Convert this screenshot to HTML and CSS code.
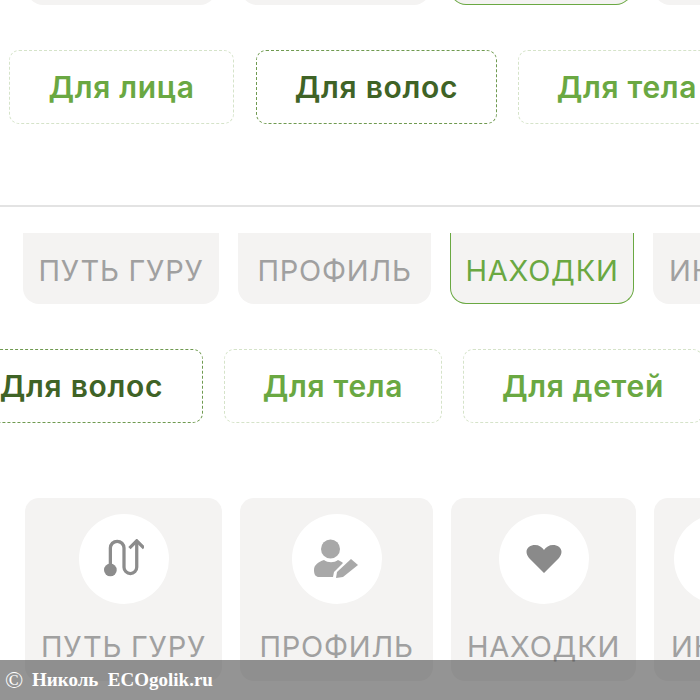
FILE: index.html
```html
<!DOCTYPE html>
<html lang="en">
<head>
  <meta charset="UTF-8">
  <title>Находки</title>
  <link rel="stylesheet" href="styles.css">
</head>
<body>
  <main class="page">
    <div class="tabs tabs-top">
      <div class="tab tab-a"></div>
      <div class="tab tab-b"></div>
      <div class="tab tab-c active"></div>
      <div class="tab tab-d"></div>
    </div>

    <div class="chips chips-one">
      <a class="chip chip-face">Для лица</a>
      <a class="chip chip-hair selected">Для волос</a>
      <a class="chip chip-body">Для тела</a>
    </div>

    <hr class="divider">

    <div class="tabs tabs-mid">
      <div class="tab tab-a">ПУТЬ ГУРУ</div>
      <div class="tab tab-b">ПРОФИЛЬ</div>
      <div class="tab tab-c active">НАХОДКИ</div>
      <div class="tab tab-d">ИКОНКИ</div>
    </div>

    <div class="chips chips-two">
      <a class="chip chip-hair2 selected">Для волос</a>
      <a class="chip chip-body2">Для тела</a>
      <a class="chip chip-kids">Для детей</a>
    </div>

    <div class="cards">
      <div class="card tab-a">
        <div class="circle">
          <svg width="40" height="40" viewBox="0 2 44 44">
            <circle cx="7" cy="36" r="7" fill="#8c8c8c"/>
            <path d="M7 36V12a7.5 7.5 0 0 1 15 0V33a7 7 0 0 0 14 0V6" fill="none" stroke="#8c8c8c" stroke-width="3.6"/>
            <path d="M28 12L36 4L44 12" fill="none" stroke="#8c8c8c" stroke-width="3.6"/>
          </svg>
        </div>
        <div class="card-title">ПУТЬ ГУРУ</div>
      </div>
      <div class="card tab-b">
        <div class="circle">
          <svg width="46" height="40" viewBox="0 0 46 40">
            <circle cx="16.5" cy="10" r="9.5" fill="#a8a8a8"/>
            <path d="M0 31C0 26 4 23 10 21C14 24 20 24 24 21C26 22 28 23 29 24L20 33L19 38H5C2 38 0 36 0 31Z" fill="#a8a8a8"/>
            <path d="M22 39L23 33L37 20L44 26L29 38Z" fill="#a8a8a8"/>
          </svg>
        </div>
        <div class="card-title">ПРОФИЛЬ</div>
      </div>
      <div class="card tab-c">
        <div class="circle">
          <svg width="36" height="30" viewBox="0 0 36 30">
            <path d="M18 29L3 14C-3 6 3 1 9 1C13 1 16 3 18 6C20 3 23 1 27 1C33 1 39 6 33 14Z" fill="#8a8a8a"/>
          </svg>
        </div>
        <div class="card-title">НАХОДКИ</div>
      </div>
      <div class="card tab-d">
        <div class="circle"></div>
        <div class="card-title">ИКОНКИ</div>
      </div>
    </div>
  </main>

  <div class="credit"><span class="credit-mark">©</span> Николь&nbsp; ECOgolik.ru</div>
</body>
</html>
```

FILE: styles.css
```css
/* Global Styles */
html, body {
  margin: 0;
  padding: 0;
  height: 700px;
  overflow: hidden;
  background: #fff;
}

body {
  position: relative;
  font-family: Inter, "Open Sans", sans-serif;
}

.page {
  width: 700px;
  overflow: hidden;
}

/* Tabs */
.tabs {
  display: flex;
  overflow: hidden;
}

.tabs-top {
  height: 5px;
  align-items: flex-end;
  padding-left: 27px;
  gap: 20px;
}

.tabs-top .tab {
  height: 40px;
}

.tabs-mid {
  margin-top: 26px;
  height: 71px;
  padding-left: 23px;
  gap: 19px;
}

.tab {
  flex: none;
  box-sizing: border-box;
  display: flex;
  align-items: center;
  justify-content: center;
  padding-top: 4px;
  background: #f4f3f2;
  border-radius: 0 0 16px 16px;
  color: #a0a0a0;
  font-size: 29px;
  letter-spacing: 0.8px;
  white-space: nowrap;
}

.tabs-top .tab-a { width: 189px; }
.tabs-top .tab-b { width: 189px; margin-left: 5px; }
.tabs-top .tab-c { width: 182px; }
.tabs-top .tab-d { margin-left: 2px; }

.tab-a { width: 196px; }
.tab-b { width: 193px; }
.tab-c { width: 184px; }
.tab-d {
  width: 190px;
  justify-content: flex-start;
  padding-left: 16px;
}

.tab.active {
  border: 1px solid #6aa842;
  border-top: 0;
  color: #6aa842;
}

/* Chips */
.chips {
  display: flex;
  height: 74px;
}

.chips-one {
  margin-top: 45px;
  padding-left: 9px;
  gap: 21px;
}

.chips-two {
  margin-top: 45px;
  margin-left: -40px;
  gap: 21px;
}

.chip {
  flex: none;
  box-sizing: border-box;
  display: flex;
  align-items: center;
  justify-content: center;
  border: 1px dashed #d5e3c9;
  border-radius: 10px;
  color: #6aa842;
  font-size: 30px;
  font-weight: 600;
  letter-spacing: 0.7px;
  white-space: nowrap;
}

.chip.selected {
  border-color: #6f9a50;
  color: #3f6326;
}

.chip-face { width: 225px; margin-right: 1px; }
.chip-hair { width: 241px; }
.chip-body { width: 218px; }
.chip-hair2 { width: 243px; }
.chip-body2 { width: 218px; }
.chip-kids { width: 240px; }

.divider {
  margin: 81px 0 0;
  border: 0;
  border-top: 2px solid #e3e3e3;
}

/* Cards */
.cards {
  display: flex;
  gap: 18px;
  margin-top: 75px;
  padding-left: 25px;
}

.card {
  flex: none;
  height: 183px;
  display: flex;
  flex-direction: column;
  align-items: center;
  background: #f4f3f2;
  border-radius: 14px;
  overflow: hidden;
}

.card.tab-a { width: 197px; }
.card.tab-c { width: 185px; }
.card.tab-d {
  align-items: flex-start;
  padding-left: 17px;
}

.card.tab-d .circle {
  margin-left: 3px;
}

.circle {
  flex: none;
  width: 90px;
  height: 90px;
  margin-top: 16px;
  display: flex;
  align-items: center;
  justify-content: center;
  background: #fff;
  border-radius: 50%;
}

.card-title {
  margin-top: 25px;
  color: #a0a0a0;
  font-size: 29px;
  letter-spacing: 0.8px;
  white-space: nowrap;
}

/* Watermark bar */
.credit {
  position: absolute;
  left: 0;
  right: 0;
  bottom: 0;
  height: 40px;
  padding-left: 5px;
  display: flex;
  align-items: center;
  gap: 4px;
  background: rgba(70, 70, 70, 0.58);
  color: #fff;
  font-family: "Liberation Serif", serif;
  font-size: 19px;
  font-weight: bold;
  white-space: pre;
}

.credit-mark {
  font-size: 24px;
  font-weight: normal;
}
```
